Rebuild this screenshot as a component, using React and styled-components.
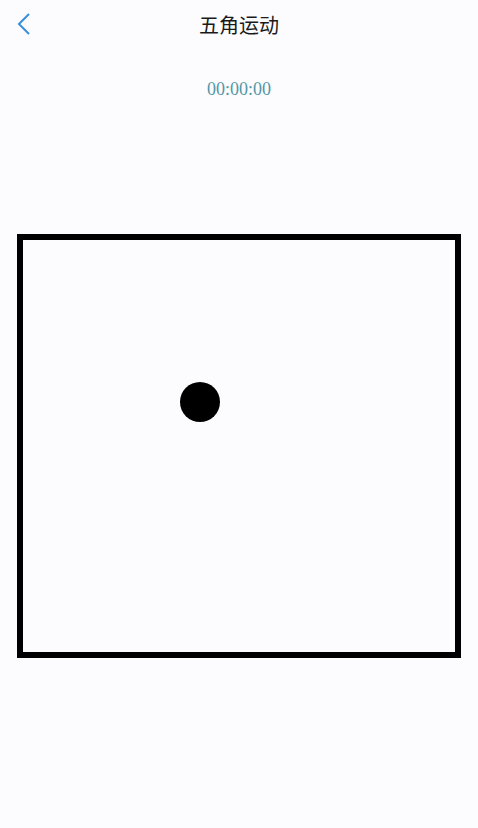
import React from 'react'
import styled, { createGlobalStyle } from 'styled-components'

const GlobalStyle = createGlobalStyle`
    html, body {
        margin: 0;
        padding: 0;
        background: #fcfcfe;
    }
    body {
        font-family: "Noto Sans", "Noto Sans CJK SC", sans-serif;
    }
`

const Page = styled.div`
    width: 478px;
    min-height: 828px;
    background: #fcfcfe;
    display: flex;
    flex-direction: column;
    align-items: center;
`

const Header = styled.header`
    position: relative;
    width: 100%;
    height: 50px;
    display: flex;
    align-items: center;
    justify-content: center;
`

const BackButton = styled.button`
    position: absolute;
    left: 12px;
    top: 10px;
    width: 24px;
    height: 28px;
    padding: 0;
    border: none;
    background: transparent;
    display: flex;
    align-items: center;
    justify-content: center;
    cursor: pointer;
`

const Title = styled.h1`
    margin: 0;
    font-family: "Noto Sans CJK SC", "Noto Sans", sans-serif;
    font-size: 20px;
    font-weight: 400;
    color: #1a1a1a;
    line-height: 1;
`

const Timer = styled.div`
    margin-top: 27px;
    font-family: "Liberation Serif", serif;
    font-size: 18px;
    line-height: 24px;
    color: #5497a8;
`

const Board = styled.div`
    position: relative;
    margin-top: 133px;
    width: 444px;
    height: 424px;
    box-sizing: border-box;
    border: 6px solid #000;
    background: #fcfcfe;
`

const Ball = styled.div`
    position: absolute;
    width: 40px;
    height: 40px;
    border-radius: 50%;
    background: #000;
`

function App() {
    const ball = { x: 157, y: 142 }

    return (
        <Page>
            <GlobalStyle />
            <Header>
                <BackButton aria-label="back">
                    <svg width="14" height="22" viewBox="0 0 14 22">
                        <path d="M12 1 L2 11 L12 21" fill="none" stroke="#3a8ed8" strokeWidth="2" />
                    </svg>
                </BackButton>
                <Title>五角运动</Title>
            </Header>
            <Timer>00:00:00</Timer>
            <Board>
                <Ball style={{ left: ball.x, top: ball.y }} />
            </Board>
        </Page>
    )
}

export default App
